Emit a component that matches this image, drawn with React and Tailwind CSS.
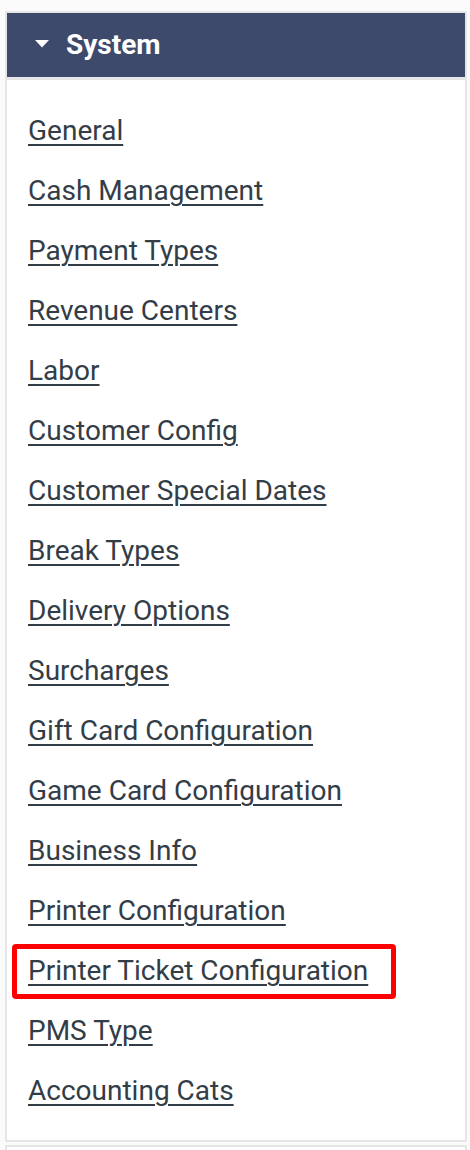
import React from "react";

const links = [
  "General",
  "Cash Management",
  "Payment Types",
  "Revenue Centers",
  "Labor",
  "Customer Config",
  "Customer Special Dates",
  "Break Types",
  "Delivery Options",
  "Surcharges",
  "Gift Card Configuration",
  "Game Card Configuration",
  "Business Info",
  "Printer Configuration",
  "Printer Ticket Configuration",
  "PMS Type",
  "Accounting Cats",
];

const highlighted = "Printer Ticket Configuration";

export default function App() {
  return (
    <div
      className="w-[470px] h-[1150px] overflow-hidden bg-[#fbfbfb] pt-[11px]"
      style={{ fontFamily: "Roboto, 'Liberation Sans', sans-serif" }}
    >
      {/* System panel */}
      <div className="ml-[5px] w-[462px] border-2 border-[#e6e6e6] bg-white">
        <div className="flex items-center h-[64px] bg-[#3e4a6b] border-b-[3px] border-[#e6e6e6] box-content pl-[28px]">
          <svg width="14" height="8" viewBox="0 0 14 8" className="mb-[2px]">
            <path d="M0 0 H14 L7 7.5 Z" fill="#ffffff" />
          </svg>
          <span className="ml-[17px] text-[28px] font-bold text-white">
            System
          </span>
        </div>

        <ul className="pt-[21px] pb-[19px] pl-[21px]">
          {links.map((label) => (
            <li key={label} className="relative h-[60px] leading-[60px]">
              {label === highlighted && (
                <div className="absolute left-[-16px] top-[3px] w-[384px] h-[55px] border-[5px] border-[#ff0000] rounded-[4px]" />
              )}
              <a
                href="#"
                className="relative text-[28px] text-[#333d47] underline underline-offset-[4px] decoration-[2px]"
              >
                {label}
              </a>
            </li>
          ))}
        </ul>
      </div>

      {/* next panel edge */}
      <div className="ml-[5px] mt-[3px] w-[462px] h-[20px] border-2 border-[#e6e6e6] bg-white" />
    </div>
  );
}
